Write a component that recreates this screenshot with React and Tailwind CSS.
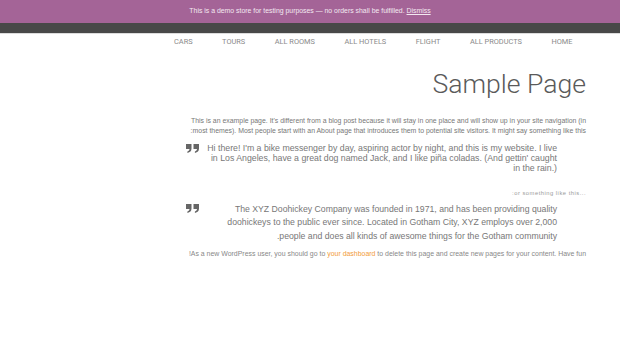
import React from "react";

const navItems = ["CARS", "TOURS", "ALL ROOMS", "ALL HOTELS", "FLIGHT", "ALL PRODUCTS", "HOME"];

function QuoteIcon() {
    return (
        <svg width="13" height="9" viewBox="0 0 13 9" className="shrink-0 text-[#666]" fill="currentColor">
            <path d="M0 0H5.5V4.6C5.5 7 4.1 8.5 1.4 9V7.4C2.8 7 3.4 6.2 3.5 5H0Z" />
            <path d="M7.5 0H13V4.6C13 7 11.6 8.5 8.9 9V7.4C10.3 7 10.9 6.2 11 5H7.5Z" />
        </svg>
    );
}

export default function App() {
    return (
        <div className="w-[620px] h-[343px] bg-white overflow-hidden" style={{ fontFamily: '"Liberation Sans", Arial, sans-serif' }}>
            {/* bandeau démo */}
            <div className="h-[23px] bg-[#a46497] flex items-center justify-center text-[6.9px] text-[#f3e8f1]">
                <span>
                    This is a demo store for testing purposes — no orders shall be fulfilled. <span className="underline">Dismiss</span>
                </span>
            </div>
            <div className="h-[10px] bg-[#484848]"></div>
            <div className="h-px bg-[#dcdcdc]"></div>

            {/* menu */}
            <nav className="h-[16px] flex items-center pl-[174px] gap-[29.5px] text-[7.4px] text-[#8a8a8a]" style={{ fontFamily: 'Roboto, sans-serif' }}>
                {navItems.map((item) => (
                    <span key={item}>{item}</span>
                ))}
            </nav>

            <div className="ml-[186px] w-[400px]">
                <h1 className="mt-[19.5px] text-right text-[26.6px] leading-[28px] font-light text-[#5a5a5a]" style={{ fontFamily: 'Roboto, sans-serif' }}>
                    Sample Page
                </h1>

                <p dir="rtl" className="mt-[18.5px] text-right text-[6.92px] leading-[10px] text-[#777]">
                    This is an example page. It's different from a blog post because it will stay in one place and will show up in your site navigation (in most themes). Most people start with an About page that introduces them to potential site visitors. It might say something like this:
                </p>

                <div className="mt-[8px] flex">
                    <div className="pt-[0px]"><QuoteIcon /></div>
                    <p dir="rtl" className="w-[350px] ml-[8px] text-right text-[8.75px] leading-[9.8px] text-[#777]">
                        Hi there! I'm a bike messenger by day, aspiring actor by night, and this is my website. I live in Los Angeles, have a great dog named Jack, and I like piña coladas. (And gettin' caught in the rain.)
                    </p>
                </div>

                <p dir="rtl" className="mt-[15.6px] text-right text-[5.8px] leading-[8px] tracking-[0.5px] text-[#9a9a9a]">
                    ...or something like this:
                </p>

                <div className="mt-[6px] flex">
                    <div className="pt-[1px]"><QuoteIcon /></div>
                    <p dir="rtl" className="w-[350px] ml-[8px] text-right text-[8.7px] leading-[13.5px] text-[#777]">
                        The XYZ Doohickey Company was founded in 1971, and has been providing quality doohickeys to the public ever since. Located in Gotham City, XYZ employs over 2,000 people and does all kinds of awesome things for the Gotham community.
                    </p>
                </div>

                <p dir="rtl" className="mt-[5.5px] text-right text-[6.95px] leading-[10px] text-[#888]">
                    As a new WordPress user, you should go to <span className="text-[#f29b38]">your dashboard</span> to delete this page and create new pages for your content. Have fun!
                </p>
            </div>
        </div>
    );
}
